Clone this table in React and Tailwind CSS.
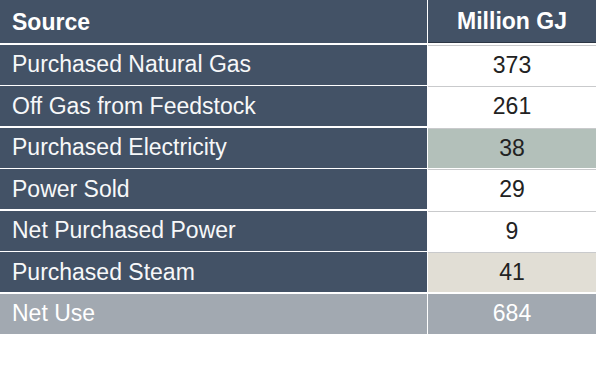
import React from "react";

const rows = [
  { label: "Purchased Natural Gas", value: "373", bg: "bg-white" },
  { label: "Off Gas from Feedstock", value: "261", bg: "bg-white" },
  { label: "Purchased Electricity", value: "38", bg: "bg-[#b3c0ba]" },
  { label: "Power Sold", value: "29", bg: "bg-white" },
  { label: "Net Purchased Power", value: "9", bg: "bg-white" },
  { label: "Purchased Steam", value: "41", bg: "bg-[#e1ded5]" },
];

export default function App() {
  return (
    <div
      className="w-[607px] h-[366px] bg-white"
      style={{ fontFamily: '"Liberation Sans", Arial, sans-serif' }}
    >
      <div className="grid grid-cols-[427px_168px] gap-x-[1px] w-[597px]">
        <div className="h-[43px] bg-[#435266] text-white font-bold text-[23px] flex items-center pl-[12px] pt-[1px]">
          Source
        </div>
        <div className="h-[43px] bg-[#435266] text-white font-bold text-[23px] flex items-center justify-center border-b border-[#2c3644] pt-[1px]">
          Million GJ
        </div>
        {rows.map((r) => (
          <React.Fragment key={r.label}>
            <div className="mt-[1.5px] h-[40px] bg-[#435266] text-[#f7f8f9] text-[23px] flex items-center pl-[12px]">
              {r.label}
            </div>
            <div
              className={`mt-[1.5px] h-[40px] ${r.bg} text-[#222222] text-[23px] flex items-center justify-center border-t border-[#c9cacc]`}
            >
              {r.value}
            </div>
          </React.Fragment>
        ))}
        <div className="mt-[1.5px] h-[40px] bg-[#a2a9b1] text-white text-[23px] flex items-center pl-[12px]">
          Net Use
        </div>
        <div className="mt-[1.5px] h-[40px] bg-[#a2a9b1] text-white text-[23px] flex items-center justify-center">
          684
        </div>
      </div>
    </div>
  );
}
